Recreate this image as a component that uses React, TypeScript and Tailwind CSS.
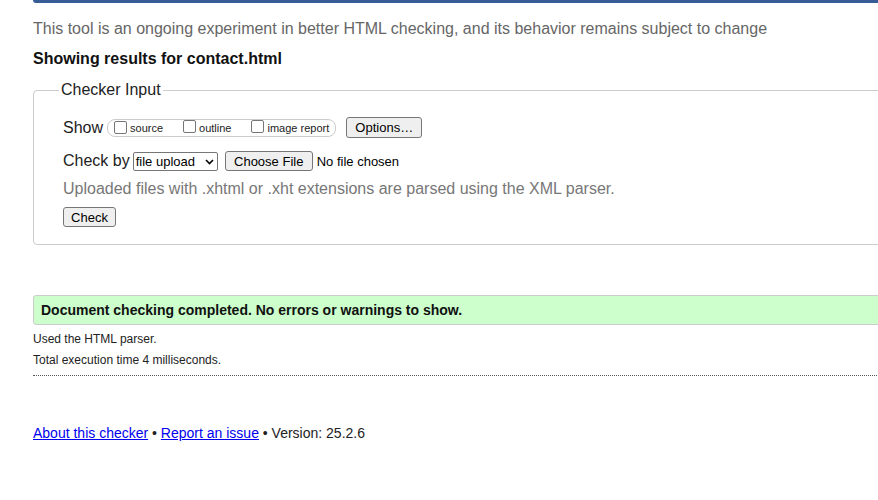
import React from "react";

function Checkbox() {
  return <span className="inline-block w-[13px] h-[13px] border border-[#767676] rounded-[2px] bg-white shrink-0" />;
}

function Btn({ children, className = "" }: { children: React.ReactNode; className?: string }) {
  return (
    <button
      type="button"
      className={
        "inline-flex items-center justify-center bg-[#efefef] border border-[#767676] rounded-[3px] text-[13px] leading-[15px] text-black font-['Liberation_Sans',Arial,sans-serif] " +
        className
      }
    >
      {children}
    </button>
  );
}

export default function App() {
  return (
    <div className="w-[878px] h-[500px] overflow-hidden bg-white font-['Liberation_Sans',Arial,sans-serif] text-[#222]">
      <div className="ml-[33px] h-[3px] bg-[#365d95] rounded-bl-[5px]" />
      <div className="pl-[33px] w-[1000px]">
        <p className="mt-[17px] text-[16px] leading-[18px] text-[#666]">
          This tool is an ongoing experiment in better HTML checking, and its behavior remains subject to change
        </p>
        <h2 className="mt-[12px] text-[16px] leading-[18px] font-bold text-[#111]">Showing results for contact.html</h2>

        <fieldset className="mt-[13px] w-[960px] border border-[#ccc] rounded-[4px] pl-[29px] pb-[15px]">
          <legend className="-ml-[4px] px-[2px] text-[16px] leading-[18px] text-[#222]">Checker Input</legend>

          <div className="mt-[18px] flex items-center h-[21px]">
            <span className="text-[16px] leading-[18px]">Show</span>
            <div className="ml-[4px] flex items-center h-[18px] border border-[#ccc] rounded-[8px] pl-[6px] pr-[6px]">
              <Checkbox />
              <span className="ml-[3px] text-[11px] leading-[13px] mt-[2px]">source</span>
              <span className="ml-[20px]"><Checkbox /></span>
              <span className="ml-[3px] text-[11px] leading-[13px] mt-[2px]">outline</span>
              <span className="ml-[20px]"><Checkbox /></span>
              <span className="ml-[3px] text-[11px] leading-[13px] mt-[2px]">image report</span>
            </div>
            <Btn className="ml-[10px] w-[76px] h-[21px]">Options…</Btn>
          </div>

          <div className="mt-[13px] flex items-center h-[20px]">
            <span className="text-[16px] leading-[18px]">Check by</span>
            <div className="ml-[3px] flex items-center justify-between w-[85px] h-[19px] border border-[#767676] rounded-[2px] bg-white pl-[2px] pr-[3px] text-[13px] leading-[15px] text-black">
              <span>file upload</span>
              <svg width="9" height="6" viewBox="0 0 9 6" className="mt-[1px]">
                <path d="M1 1 L4.5 4.5 L8 1" fill="none" stroke="#000" strokeWidth="1.6" />
              </svg>
            </div>
            <Btn className="ml-[7px] w-[88px] h-[20px]">Choose File</Btn>
            <span className="ml-[4px] text-[13px] leading-[15px] text-black">No file chosen</span>
          </div>

          <p className="mt-[9px] text-[16px] leading-[18px] text-[#777]">
            Uploaded files with .xhtml or .xht extensions are parsed using the XML parser.
          </p>

          <Btn className="mt-[9px] w-[53px] h-[20px]">Check</Btn>
        </fieldset>

        <div className="mt-[50px] w-[960px] h-[30px] flex items-center bg-[#ccffcc] border border-[#ccc] rounded-[3px] pl-[7px]">
          <span className="text-[14px] leading-[16px] font-bold text-[#111]">
            Document checking completed. No errors or warnings to show.
          </span>
        </div>

        <p className="mt-[7px] text-[12px] leading-[14px] text-[#222]">Used the HTML parser.</p>
        <p className="mt-[7px] text-[12px] leading-[14px] text-[#222]">Total execution time 4 milliseconds.</p>
        <div className="mt-[8px] w-[960px] border-b border-dotted border-[#555]" />

        <p className="mt-[49px] text-[14px] leading-[16px] text-[#222]">
          <a href="#" className="text-[#0000ee] underline">About this checker</a>
          {" • "}
          <a href="#" className="text-[#0000ee] underline">Report an issue</a>
          {" • Version: 25.2.6"}
        </p>
      </div>
    </div>
  );
}
